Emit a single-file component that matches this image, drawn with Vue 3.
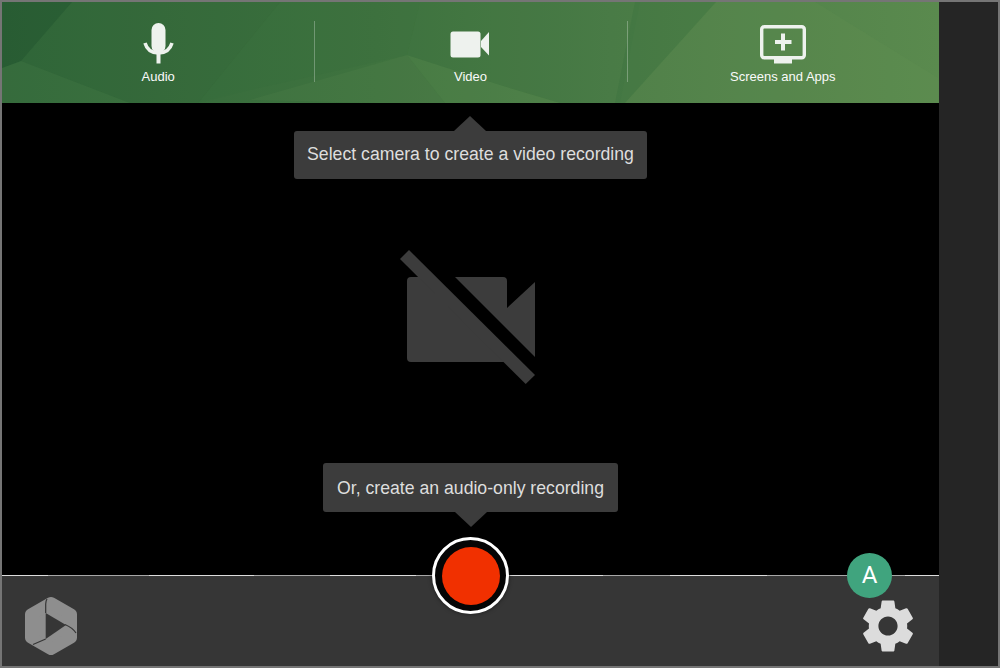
<template>
  <div class="window">
    <div class="main">
      <header class="sources">
        <svg class="facets" viewBox="2 2 937 101" preserveAspectRatio="none">
          <polygon v-for="(f, i) in facets" :key="i" :points="f.points" :fill="f.fill" />
        </svg>
        <button v-for="s in sources" :key="s.label" class="source">
          <svg v-if="s.icon === 'mic'" class="icon" viewBox="138 20 41 46" width="41" height="46">
            <rect x="151.5" y="23" width="14" height="30" rx="7" fill="#eef2ee" />
            <path d="M145 43 C147 50 152 53 158.5 53 C165 53 170 50 172 43" fill="none" stroke="#eef2ee" stroke-width="3.5" />
            <rect x="156.5" y="53" width="4" height="10.5" fill="#eef2ee" />
          </svg>
          <svg v-else-if="s.icon === 'video'" class="icon" viewBox="448 20 46 46" width="46" height="46">
            <rect x="451.5" y="31.5" width="30" height="26" rx="2.5" fill="#eef2ee" />
            <path d="M482 41 L490 32 V55.5 L482 47 Z" fill="#eef2ee" />
          </svg>
          <svg v-else class="icon" viewBox="758 20 50 46" width="50" height="46">
            <rect x="761.7" y="26.7" width="42.6" height="31" rx="2.5" fill="none" stroke="#eef2ee" stroke-width="3.4" />
            <rect x="774" y="59" width="18" height="4.5" fill="#eef2ee" />
            <path d="M775 40 H781 V33.5 H785 V40 H791.5 V44 H785 V50.5 H781 V44 H775 Z" fill="#eef2ee" />
          </svg>
          <span>{{ s.label }}</span>
        </button>
      </header>

      <section class="stage">
        <div class="tip tip-up">Select camera to create a video recording</div>
        <svg class="cam-off" viewBox="400 250 136 135" width="136" height="135">
          <g fill="#3c3c3c">
            <path d="M428 277 H411 Q407 277 407 281 V358 Q407 362 411 362 H512 Z" />
            <path d="M455 277 H503 Q507 277 507 281 V308 L535 282 V357 Z" />
            <path d="M409 250 L535 375 L525.7 384 L400 259 Z" />
          </g>
        </svg>
        <div class="tip tip-down">Or, create an audio-only recording</div>
      </section>

      <footer class="controls">
        <svg class="logo" viewBox="22 596 58 62" width="58" height="62">
          <polygon
            points="51,604 71,615.5 71,638.5 51,650 31,638.5 31,615.5"
            fill="#8e8e8e"
            stroke="#8e8e8e"
            stroke-width="12"
            stroke-linejoin="round"
          />
          <polygon points="45.7,614 66,626 45.7,640" fill="#363636" />
          <path d="M47 600 Q45.7 602 45.7 605 V614 M45.7 640 L33 645.5 M65 625.5 Q73 629 76 634" fill="none" stroke="#363636" stroke-width="1.2" />
        </svg>
        <svg class="gear" viewBox="0 0 24 24" width="64" height="64">
          <path
            fill="#dcdcdc"
            d="M19.14 12.94c.04-.3.06-.61.06-.94 0-.32-.02-.64-.07-.94l2.03-1.58c.18-.14.23-.41.12-.61l-1.92-3.32c-.12-.22-.37-.29-.59-.22l-2.39.96c-.5-.38-1.03-.7-1.62-.94l-.36-2.54c-.04-.24-.24-.41-.48-.41h-3.84c-.24 0-.43.17-.47.41l-.36 2.54c-.59.24-1.13.57-1.62.94l-2.39-.96c-.22-.08-.47 0-.59.22L2.74 8.87c-.12.21-.08.47.12.61l2.03 1.58c-.05.3-.09.63-.09.94s.02.64.07.94l-2.03 1.58c-.18.14-.23.41-.12.61l1.92 3.32c.12.22.37.29.59.22l2.39-.96c.5.38 1.03.7 1.62.94l.36 2.54c.05.24.24.41.48.41h3.84c.24 0 .44-.17.47-.41l.36-2.54c.59-.24 1.13-.56 1.62-.94l2.39.96c.22.08.47 0 .59-.22l1.92-3.32c.12-.22.07-.47-.12-.61l-2.01-1.58zM12 15.6c-1.98 0-3.6-1.62-3.6-3.6s1.62-3.6 3.6-3.6 3.6 1.62 3.6 3.6-1.62 3.6-3.6 3.6z"
          />
        </svg>
        <button class="record"><span class="dot"></span></button>
        <div class="avatar">A</div>
      </footer>
    </div>
    <aside class="side"></aside>
  </div>
</template>

<script setup>
const sources = [
  { icon: 'mic', label: 'Audio' },
  { icon: 'video', label: 'Video' },
  { icon: 'screen', label: 'Screens and Apps' },
];

// low poly background of the header
const facets = [
  { points: '2,2 72,2 21,61 2,68', fill: 'rgba(28,78,42,0.4)' },
  { points: '72,2 280,2 198,103 130,103 21,61', fill: 'rgba(40,90,48,0.14)' },
  { points: '2,68 21,61 130,103 2,103', fill: 'rgba(90,140,80,0.12)' },
  { points: '280,2 420,2 407,55 250,90 198,103', fill: 'rgba(50,105,58,0.14)' },
  { points: '407,55 445,103 375,103 250,100', fill: 'rgba(110,150,90,0.12)' },
  { points: '407,55 500,85 560,103 445,103', fill: 'rgba(110,160,95,0.16)' },
  { points: '420,2 640,2 620,103 560,103 500,85 407,55', fill: 'rgba(60,115,65,0.14)' },
  { points: '635,2 716,2 625,103 615,103', fill: 'rgba(50,110,60,0.24)' },
  { points: '716,2 815,2 938,78 938,103 625,103', fill: 'rgba(105,150,90,0.16)' },
];
</script>

<style scoped>
.window {
  width: 1000px;
  height: 668px;
  box-sizing: border-box;
  border: 2px solid #757575;
  display: flex;
  font-family: "Liberation Sans", Arial, sans-serif;
}

.main {
  width: 937px;
  display: flex;
  flex-direction: column;
}

.side {
  flex: 1;
  background: #252525;
}

.sources {
  position: relative;
  height: 101px;
  display: grid;
  grid-template-columns: repeat(3, 1fr);
  background: linear-gradient(90deg, #31673a 0%, #3f733f 40%, #4c7d47 65%, #5a8a4e 100%);
  overflow: hidden;
}

.facets {
  position: absolute;
  inset: 0;
  width: 100%;
  height: 100%;
}

.source {
  position: relative;
  background: none;
  border: 0;
  padding: 18px 0 0;
  color: #fafafa;
  font: 13px "Liberation Sans", Arial, sans-serif;
  display: flex;
  flex-direction: column;
  align-items: center;
}

.source + .source::before {
  content: "";
  position: absolute;
  left: 0;
  top: 19px;
  height: 61px;
  width: 1px;
  background: rgba(255, 255, 255, 0.28);
}

.source .icon {
  display: block;
}

.source span {
  line-height: 15px;
  margin-top: 3px;
}

.stage {
  flex: 1;
  background: #000;
  display: flex;
  flex-direction: column;
  align-items: center;
  padding-top: 28px;
}

.tip {
  position: relative;
  height: 48px;
  line-height: 47px;
  padding: 0 13.5px;
  background: #3c3c3c;
  color: #dedede;
  font-size: 17.67px;
  border-radius: 3px;
  white-space: nowrap;
}

.tip-up::before,
.tip-down::after {
  content: "";
  position: absolute;
  left: 50%;
  margin-left: -16px;
  border-left: 16px solid transparent;
  border-right: 16px solid transparent;
}

.tip-up::before {
  top: -15px;
  border-bottom: 15px solid #3c3c3c;
}

.tip-down::after {
  bottom: -15px;
  border-top: 15px solid #3c3c3c;
}

.cam-off {
  margin-top: 71px;
  margin-left: -5px;
  display: block;
}

.tip-down {
  margin-top: 78px;
  height: 49px;
  line-height: 50px;
  padding: 0 14px;
}

.controls {
  position: relative;
  height: 91px;
  box-sizing: border-box;
  background: #363636;
  border-top: 1px solid #a8a8a8;
  display: flex;
  justify-content: space-between;
  align-items: center;
  padding: 10px 19px 0 20px;
}

/* the line under the stage is brighter in parts */
.controls::before {
  content: "";
  position: absolute;
  left: 0;
  right: 0;
  top: -1px;
  height: 1px;
  background: linear-gradient(
    90deg,
    #ddd 0 46px,
    transparent 46px 147px,
    #ddd 147px 252px,
    transparent 252px 328px,
    #ddd 328px 414px,
    transparent 414px 508px,
    #ddd 508px 601px,
    transparent 601px 668px,
    #ddd 668px 765px,
    transparent 765px 903px,
    #ddd 903px 937px
  );
}

.logo,
.gear {
  display: block;
}

.record {
  position: absolute;
  left: 430px;
  top: -39px;
  width: 77px;
  height: 77px;
  box-sizing: border-box;
  border-radius: 50%;
  border: 3px solid #fff;
  background: #050505;
  padding: 0;
  display: flex;
  align-items: center;
  justify-content: center;
  box-shadow: 0 0 4px rgba(0, 0, 0, 0.5);
}

.dot {
  width: 58px;
  height: 58px;
  border-radius: 50%;
  background: #f13000;
}

.avatar {
  position: absolute;
  left: 845px;
  top: -23px;
  width: 45px;
  height: 45px;
  border-radius: 50%;
  background: #40a47e;
  color: #fff;
  font: 400 24px/45px Roboto, "Liberation Sans", sans-serif;
  text-align: center;
}
</style>

<style>
body {
  margin: 0;
  background: #000;
}
</style>
